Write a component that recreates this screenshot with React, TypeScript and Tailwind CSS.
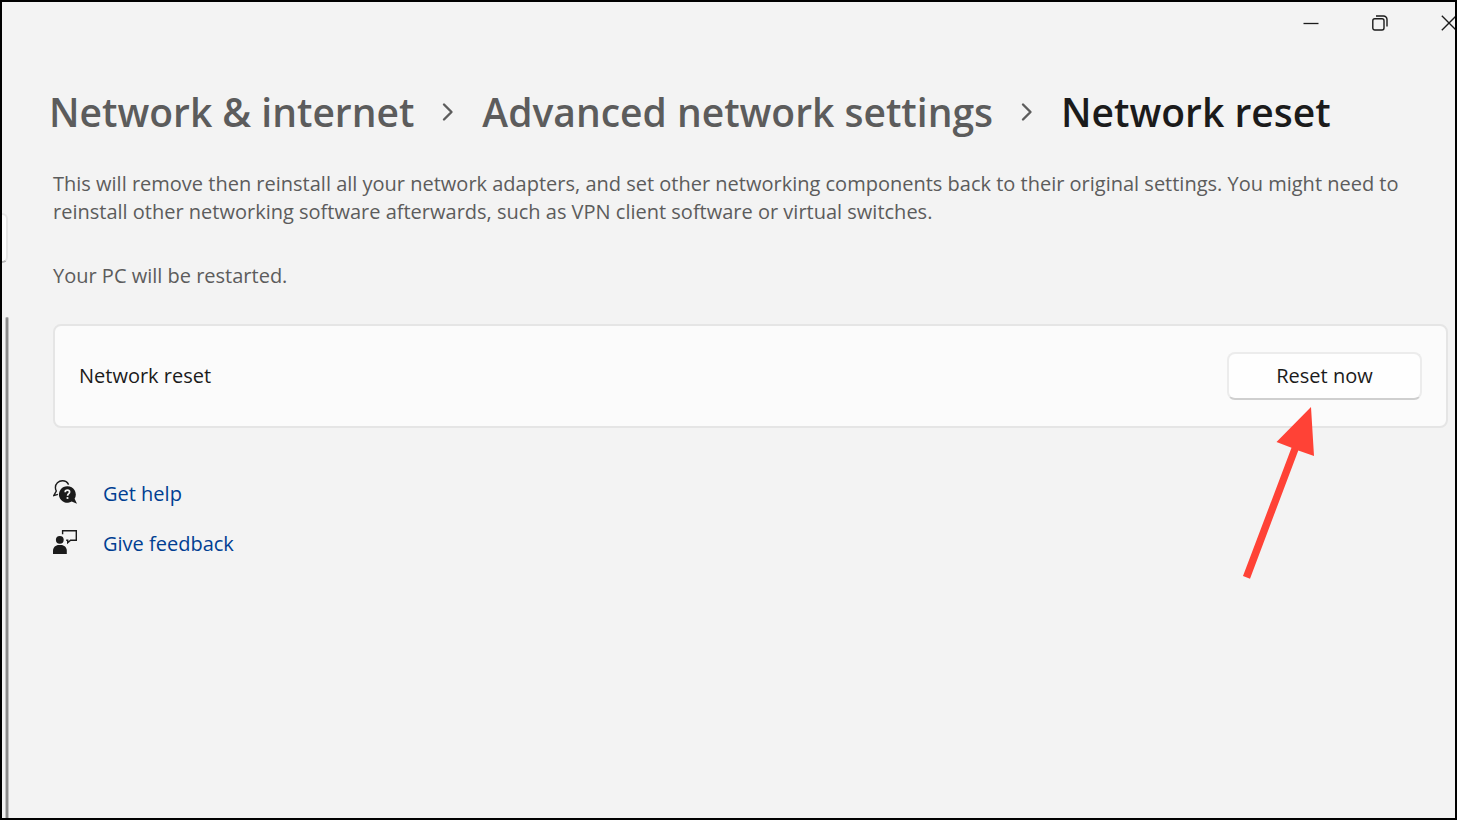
import type { ReactNode } from 'react';

function Chevron() {
  return (
    <svg className="w-3 h-5 shrink-0 text-[#5c5c5c]" viewBox="0 0 12 20" fill="none" stroke="currentColor" strokeWidth="2.4" aria-hidden="true">
      <path d="M2 2.500 9.500 10 2 17.500" strokeLinecap="round" strokeLinejoin="round" />
    </svg>
  );
}

function HelpIcon() {
  return (
    <svg className="w-6 h-6 shrink-0" viewBox="0 0 24 24" fill="none" aria-hidden="true">
      <path
        d="M15.600 4.600C14.400 2.200 12.200.8 9.500.8 5.400.8 2.400 3.700 2.400 7.400c0 1.500.4 2.600.9 3.600L.8 15.600l4.100-1.300"
        stroke="#1b1b1b"
        strokeWidth="1.400"
      />
      <path d="M14.300 6.200a8.300 8.300 0 1 0 4.400 15.300L24 23.800l-2.400-5.100A8.300 8.300 0 0 0 14.300 6.200z" fill="#1b1b1b" />
      <path d="M12.200 12.200c0-1.200.9-2 2.200-2s2.200.8 2.200 1.900c0 1.600-2 1.700-2 3.600" stroke="#f3f3f3" strokeWidth="1.700" />
      <circle cx="14.500" cy="18" r="1.100" fill="#f3f3f3" />
    </svg>
  );
}

function FeedbackIcon() {
  return (
    <svg className="w-6 h-6 shrink-0" viewBox="0 0 24 24" fill="none" aria-hidden="true">
      <circle cx="6.800" cy="9.800" r="3.900" fill="#1b1b1b" />
      <path d="M0 24v-3.200C0 17.400 2.600 15 6 15h1.800c3.400 0 6 2.400 6 5.800V24z" fill="#1b1b1b" />
      <path d="M9.600 4.300V.8h13.700v9.400h-5.700l-2.900 2.500v-2.500h-1.500" stroke="#1b1b1b" strokeWidth="1.400" />
    </svg>
  );
}

function WindowControls() {
  return (
    <div className="flex justify-end gap-13 h-[42px] items-center -mr-0.5">
      <button type="button" aria-label="Minimize" className="w-4 h-4 shrink-0">
        <svg className="w-4 h-4" viewBox="0 0 16 16" stroke="#1b1b1b" strokeWidth="1.300">
          <path d="M.5 8.500h15" />
        </svg>
      </button>
      <button type="button" aria-label="Restore" className="w-4 h-4 shrink-0 mx-px">
        <svg className="w-4 h-4" viewBox="0 0 16 16" fill="none" stroke="#1b1b1b" strokeWidth="1.400">
          <rect x=".8" y="3.800" width="11.200" height="11.200" rx="2" />
          <path d="M4 1h7.500A3.500 3.500 0 0 1 15 4.500v7" />
        </svg>
      </button>
      <button type="button" aria-label="Close" className="w-4 h-4 shrink-0">
        <svg className="w-4 h-4" viewBox="0 0 16 16" stroke="#1b1b1b" strokeWidth="1.300">
          <path d="M.8.8l14.400 14.400M15.200.8.8 15.200" />
        </svg>
      </button>
    </div>
  );
}

// Points from the lower left up to the reset button
function Arrow() {
  return (
    <svg className="absolute top-full right-27 mt-[7px] w-18 h-[172px] pointer-events-none" viewBox="0 0 72 172" fill="#ff4236" aria-hidden="true">
      <path d="M69 0 34.500 35l15 5.800L1 169l7 2.700L56.300 43.400 72 49z" />
    </svg>
  );
}

function SupportLink({ icon, children }: { icon: ReactNode; children: ReactNode }) {
  return (
    <a href="#" className="flex items-start gap-[26px] text-[#003e92] w-fit">
      {icon}
      <span>{children}</span>
    </a>
  );
}

export default function App() {
  return (
    <div className="min-h-screen flex border-2 border-black bg-[#f3f3f3] text-[#1b1b1b] font-['Open_Sans','Noto_Sans',sans-serif] text-[20px] leading-7 overflow-hidden">
      <aside className="w-[7px] shrink-0 flex flex-col pt-[211px]">
        <div className="w-1.5 h-[50px] bg-[#fdfdfd] border-2 border-l-0 border-[#e5e5e5] border-b-[#b5b5b5] rounded-r-lg" />
        <div className="mt-[54px] ml-[3px] w-1 flex-1 rounded-t-full bg-[#8b8b8b] border-x border-[#c4c4c4]" />
      </aside>

      <div className="flex-1 min-w-0">
        <WindowControls />

        <main className="pl-11 pr-[7px] pt-[38px]">
          <nav aria-label="Breadcrumb" className="flex items-center gap-7 -ml-1 text-[39px] leading-15 font-semibold whitespace-nowrap">
            <a href="#" className="text-[#5c5c5c]">Network &amp; internet</a>
            <Chevron />
            <a href="#" className="text-[#5c5c5c]">Advanced network settings</a>
            <Chevron />
            <h1>Network reset</h1>
          </nav>

          <div className="mt-7 space-y-9 text-[#5c5c5c]">
            <p>
              This will remove then reinstall all your network adapters, and set other networking components back to their original settings. You might need to reinstall other networking software afterwards, such as VPN client software or virtual switches.
            </p>
            <p>Your PC will be restarted.</p>
          </div>

          <section className="mt-[34px] flex items-center justify-between bg-[#fbfbfb] border-2 border-[#e5e5e5] rounded-lg px-6 h-[104px]">
            <h2>Network reset</h2>
            <div className="relative">
              <button type="button" className="w-[195px] h-12 bg-[#fefefe] border-2 border-[#ececec] border-b-[#cfcfcf] rounded-lg">
                Reset now
              </button>
              <Arrow />
            </div>
          </section>

          <div className="mt-13 space-y-[22px]">
            <SupportLink icon={<HelpIcon />}>Get help</SupportLink>
            <SupportLink icon={<FeedbackIcon />}>Give feedback</SupportLink>
          </div>
        </main>
      </div>
    </div>
  );
}
